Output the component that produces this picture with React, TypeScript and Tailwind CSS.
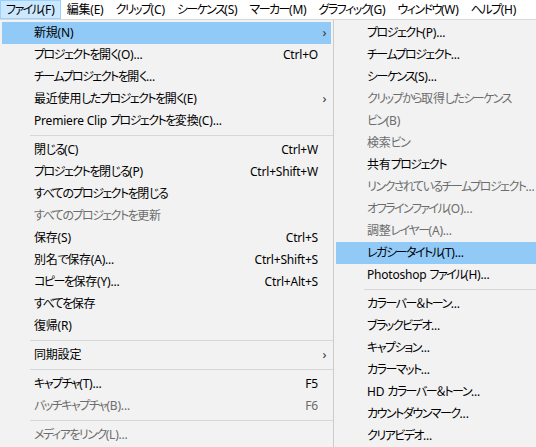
import React from "react";

type Entry =
  | { sep: true }
  | { label: string; shortcut?: string; sub?: boolean; disabled?: boolean; active?: boolean };

const menuBar = [
  "ファイル(F)",
  "編集(E)",
  "クリップ(C)",
  "シーケンス(S)",
  "マーカー(M)",
  "グラフィック(G)",
  "ウィンドウ(W)",
  "ヘルプ(H)",
];

const fileMenu: Entry[] = [
  { label: "新規(N)", sub: true, active: true },
  { label: "プロジェクトを開く(O)...", shortcut: "Ctrl+O" },
  { label: "チームプロジェクトを開く..." },
  { label: "最近使用したプロジェクトを開く(E)", sub: true },
  { label: "Premiere Clip プロジェクトを変換(C)..." },
  { sep: true },
  { label: "閉じる(C)", shortcut: "Ctrl+W" },
  { label: "プロジェクトを閉じる(P)", shortcut: "Ctrl+Shift+W" },
  { label: "すべてのプロジェクトを閉じる" },
  { label: "すべてのプロジェクトを更新", disabled: true },
  { label: "保存(S)", shortcut: "Ctrl+S" },
  { label: "別名で保存(A)...", shortcut: "Ctrl+Shift+S" },
  { label: "コピーを保存(Y)...", shortcut: "Ctrl+Alt+S" },
  { label: "すべてを保存" },
  { label: "復帰(R)" },
  { sep: true },
  { label: "同期設定", sub: true },
  { sep: true },
  { label: "キャプチャ(T)...", shortcut: "F5" },
  { label: "バッチキャプチャ(B)...", shortcut: "F6", disabled: true },
  { sep: true },
  { label: "メディアをリンク(L)...", disabled: true },
];

const newMenu: Entry[] = [
  { label: "プロジェクト(P)..." },
  { label: "チームプロジェクト..." },
  { label: "シーケンス(S)..." },
  { label: "クリップから取得したシーケンス", disabled: true },
  { label: "ビン(B)", disabled: true },
  { label: "検索ビン", disabled: true },
  { label: "共有プロジェクト" },
  { label: "リンクされているチームプロジェクト...", disabled: true },
  { label: "オフラインファイル(O)...", disabled: true },
  { label: "調整レイヤー(A)...", disabled: true },
  { label: "レガシータイトル(T)...", active: true },
  { label: "Photoshop ファイル(H)..." },
  { sep: true },
  { label: "カラーバー＆トーン..." },
  { label: "ブラックビデオ..." },
  { label: "キャプション..." },
  { label: "カラーマット..." },
  { label: "HD カラーバー＆トーン..." },
  { label: "カウントダウンマーク..." },
  { label: "クリアビデオ..." },
];

// kana in the UI font is much narrower than Noto's, so squeeze those runs
function Jp({ text }: { text: string }) {
  const parts = text.split(/([\u3040-\u30ff＆]+)/);
  return (
    <>
      {parts.map((p, i) =>
        i % 2 === 1 ? (
          <span key={i} className="tracking-[-1.5px]">
            {p}
          </span>
        ) : (
          <span key={i} className="tracking-[-0.2px]">
            {p}
          </span>
        )
      )}
    </>
  );
}

function MenuRows({ items, submenu }: { items: Entry[]; submenu?: boolean }) {
  return (
    <>
      {items.map((it, i) => {
        if ("sep" in it) {
          return (
            <div key={i} className="h-[7px] flex items-center pl-[30px]">
              <div className="h-px w-full bg-[#d7d7d7]" />
            </div>
          );
        }
        return (
          <div
            key={i}
            className={`h-[22px] flex items-center ml-[2px] ${submenu ? "" : "mr-[2px]"} ${
              it.active ? "bg-[#91c9f7]" : ""
            } ${it.disabled ? "text-[#6d6d6d]" : "text-black"}`}
          >
            <span className={`flex-1 whitespace-nowrap ${submenu ? "pl-[31px]" : "pl-[32px]"}`}>
              <Jp text={it.label} />
            </span>
            {!submenu && <span className="whitespace-nowrap tracking-[-0.2px]">{it.shortcut}</span>}
            {!submenu && (
              <span className="w-[13px] flex justify-center text-[13px] leading-none text-[#333] -mt-[2px]">
                {it.sub ? "›" : ""}
              </span>
            )}
          </div>
        );
      })}
    </>
  );
}

export default function App() {
  return (
    <div className="w-[536px] h-[447px] overflow-hidden bg-[#f0f0f0] text-[12px] font-['Segoe_UI','Noto_Sans','Noto_Sans_CJK_JP',sans-serif] [font-feature-settings:'palt'] leading-none">
      <div className="h-[19px] bg-white flex">
        {menuBar.map((m, i) => (
          <div
            key={m}
            className={`px-[5px] flex items-center whitespace-nowrap border ${
              i === 0 ? "bg-[#cce8ff] border-[#99d1ff]" : "border-transparent"
            }`}
          >
            <Jp text={m} />
          </div>
        ))}
      </div>
      <div className="flex border-t border-[#d9d9d9] h-[428px]">
        <div className="w-[334px] shrink-0 bg-[#f2f2f2] border-r border-[#cccccc] pt-[2px]">
          <MenuRows items={fileMenu} />
        </div>
        <div className="flex-1 bg-[#f2f2f2] pt-[2px]">
          <MenuRows items={newMenu} submenu />
        </div>
      </div>
    </div>
  );
}
